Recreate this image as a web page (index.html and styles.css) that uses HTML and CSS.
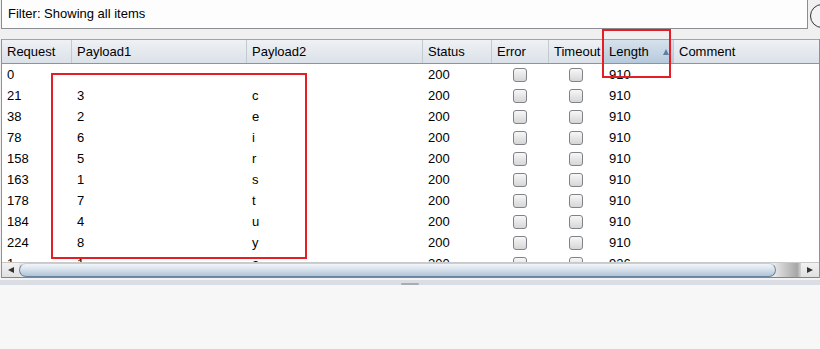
FILE: index.html
```html
<!DOCTYPE html>
<html lang="en">
<head>
  <meta charset="UTF-8">
  <meta name="viewport" content="width=device-width, initial-scale=1.0">
  <title>Intruder Results</title>
  <link rel="stylesheet" href="styles.css">
</head>
<body>
  <div class="filter-row">
    <div class="filter">Filter: Showing all items</div>
    <span class="round-btn"></span>
  </div>

  <div class="results">
    <div class="grid head">
      <div class="cell">Request</div>
      <div class="cell">Payload1</div>
      <div class="cell">Payload2</div>
      <div class="cell">Status</div>
      <div class="cell">Error</div>
      <div class="cell">Timeout</div>
      <div class="cell sorted">Length <span class="sort-up"></span></div>
      <div class="cell">Comment</div>
    </div>

    <div class="rows" id="rows"></div>

    <div class="hscroll">
      <span class="btn"><span class="arrow-left"></span></span>
      <span class="thumb"></span>
      <span class="shade"></span>
      <span class="btn"><span class="arrow-right"></span></span>
    </div>
  </div>

  <div class="splitter"><span class="grip"></span></div>
  <div class="lower"></div>

  <div class="mark mark-payloads"></div>
  <div class="mark mark-length"></div>

  <script>
    const data = [
      ["0", "", "", "200", "910"],
      ["21", "3", "c", "200", "910"],
      ["38", "2", "e", "200", "910"],
      ["78", "6", "i", "200", "910"],
      ["158", "5", "r", "200", "910"],
      ["163", "1", "s", "200", "910"],
      ["178", "7", "t", "200", "910"],
      ["184", "4", "u", "200", "910"],
      ["224", "8", "y", "200", "910"],
      ["1", "1", "a", "200", "926"]
    ];

    const rows = document.getElementById("rows");
    rows.innerHTML = data.map(function (r) {
      return `
        <div class="grid row">
          <div class="cell">${r[0]}</div>
          <div class="cell">${r[1]}</div>
          <div class="cell">${r[2]}</div>
          <div class="cell">${r[3]}</div>
          <div class="cell center"><span class="check"></span></div>
          <div class="cell center"><span class="check"></span></div>
          <div class="cell">${r[4]}</div>
          <div class="cell"></div>
        </div>`;
    }).join("");
  </script>
</body>
</html>
```

FILE: styles.css
```css
body {
  margin: 0;
  width: 820px;
  height: 349px;
  overflow: hidden;
  position: relative;
  display: flex;
  flex-direction: column;
  background: #f0f0f0;
  font-family: "Liberation Sans", Arial, sans-serif;
  font-size: 13px;
  color: #000;
}
.filter-row {
  display: flex;
  align-items: flex-start;
  height: 29px;
}
.filter {
  margin-left: 1px;
  width: 807px;
  height: 29px;
  flex-shrink: 0;
  box-sizing: border-box;
  border: 1px solid #8a8d92;
  border-top: none;
  background: #fdfdfd;
  padding-left: 6px;
  line-height: 28px;
}
.round-btn {
  flex-shrink: 0;
  margin: 4px 0 0 2px;
  width: 24px;
  height: 24px;
  box-sizing: border-box;
  border: 1px solid #333;
  border-radius: 50%;
  background: #f4f4f4;
}
.results {
  margin: 10px 0 0 1px;
  width: 819px;
  box-sizing: border-box;
  border-left: 1px solid #8e9298;
  border-right: 1px solid #8e9298;
  background: #fff;
}
.grid {
  display: grid;
  grid-template-columns: 69px 175px 176px 69px 57px 55px 70px 1fr;
}
.cell {
  padding-left: 5px;
  border-left: 1px solid transparent;
  white-space: nowrap;
  overflow: hidden;
}
.cell:first-child {
  border-left: none;
}
.head {
  height: 23px;
  line-height: 23px;
  border-top: 1px solid #9ea4ac;
  border-bottom: 1px solid #8e949c;
  background: linear-gradient(to bottom, #eef1f5, #e3e8ee 60%, #dbe1e8);
}
.head .cell {
  border-left-color: #c3c9d1;
}
.head .cell:first-child {
  border-left: none;
}
.head .sorted {
  display: flex;
  align-items: center;
  justify-content: space-between;
  padding-right: 4px;
  background: linear-gradient(to bottom, #d6e1ec, #c4d4e3 60%, #b6c9db);
}
.sort-up {
  width: 0;
  height: 0;
  border-left: 3px solid transparent;
  border-right: 3px solid transparent;
  border-bottom: 6px solid #5a7fa9;
}
.rows {
  height: 198px;
  overflow: hidden;
}
.row {
  height: 21px;
  line-height: 22px;
}
.center {
  display: flex;
  align-items: center;
  justify-content: center;
  padding-left: 0;
}
.check {
  width: 14px;
  height: 14px;
  box-sizing: border-box;
  border: 1px solid #7d8389;
  border-radius: 3px;
  background: linear-gradient(to bottom, #f7f7f7, #e6e6e6 50%, #d6d6d6);
}
.hscroll {
  display: flex;
  height: 16px;
  box-sizing: border-box;
  border-top: 1px solid #c8c8c8;
  border-bottom: 1px solid #7c8590;
  background: #e6e6e6;
}
.btn {
  width: 17px;
  flex-shrink: 0;
  display: flex;
  align-items: center;
  justify-content: center;
  background: linear-gradient(to bottom, #f2f2f2, #e0e0e0);
}
.btn:last-child {
  width: 18px;
}
.arrow-left {
  width: 0;
  height: 0;
  border-top: 3px solid transparent;
  border-bottom: 3px solid transparent;
  border-right: 6px solid #333;
}
.arrow-right {
  width: 0;
  height: 0;
  border-top: 3px solid transparent;
  border-bottom: 3px solid transparent;
  border-left: 6px solid #333;
}
.thumb {
  flex: 1;
  box-sizing: border-box;
  border: 1px solid #6a849f;
  border-top-color: #c3d0dc;
  border-radius: 10px;
  background: linear-gradient(to bottom, #f1f5f9, #dbe4ee 40%, #c5d4e2 70%, #b0c3d5);
}
.shade {
  width: 25px;
  flex-shrink: 0;
  background: linear-gradient(to right, #e2e2e2, #a6a6a6 85%, #d6d6d6);
}
.splitter {
  height: 5px;
  border-top: 2px solid #f3f3f3;
  background: #dadde3;
  display: flex;
  align-items: flex-end;
  justify-content: center;
}
.grip {
  width: 18px;
  height: 2px;
  border-radius: 1px;
  background: #a9acb1;
}
.lower {
  flex: 1;
  background: #f7f7f7;
}
.mark {
  position: absolute;
  box-sizing: border-box;
  border: 2px solid #e31e25;
}
.mark-payloads {
  left: 51px;
  top: 73px;
  width: 256px;
  height: 186px;
}
.mark-length {
  left: 602px;
  top: 29px;
  width: 69px;
  height: 49px;
}
```
